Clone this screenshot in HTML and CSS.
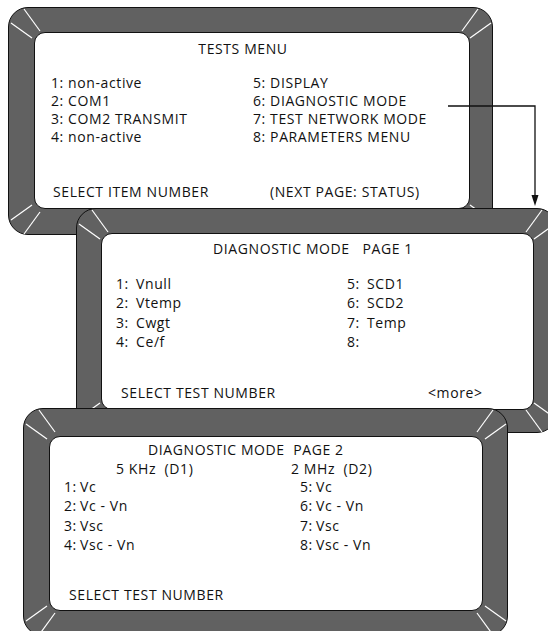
FILE: index.html
```html
<!DOCTYPE html>
<html lang="en">
<head>
    <meta charset="UTF-8">
    <meta name="viewport" content="width=device-width, initial-scale=1.0">
    <title>Tests Menu Screens</title>
    <link rel="stylesheet" href="styles.css">
</head>
<body>
    <div class="canvas">

        <!-- Pantalla 1: menu de tests -->
        <div class="bezel bezel-tests">
            <div class="screen">
                <div class="screen-title title-tests">TESTS MENU</div>
                <div class="menu-grid menu-tests">
                    <ul>
                        <li>1: non-active</li>
                        <li>2: COM1</li>
                        <li>3: COM2 TRANSMIT</li>
                        <li>4: non-active</li>
                    </ul>
                    <ul>
                        <li>5: DISPLAY</li>
                        <li>6: DIAGNOSTIC MODE</li>
                        <li>7: TEST NETWORK MODE</li>
                        <li>8: PARAMETERS MENU</li>
                    </ul>
                </div>
                <div class="screen-footer footer-tests">
                    <span class="footer-left">SELECT ITEM NUMBER</span>
                    <span>(NEXT PAGE: STATUS)</span>
                </div>
            </div>
            <svg class="corner tl" viewBox="0 0 36 36"><line x1="16" y1="2" x2="32" y2="24"/><line x1="3" y1="16" x2="24" y2="31"/></svg>
            <svg class="corner tr" viewBox="0 0 36 36"><line x1="16" y1="2" x2="32" y2="24"/><line x1="3" y1="16" x2="24" y2="31"/></svg>
            <svg class="corner bl" viewBox="0 0 36 36"><line x1="16" y1="2" x2="32" y2="24"/><line x1="3" y1="16" x2="24" y2="31"/></svg>
            <svg class="corner br" viewBox="0 0 36 36"><line x1="16" y1="2" x2="32" y2="24"/><line x1="3" y1="16" x2="24" y2="31"/></svg>
        </div>

        <!-- Flecha desde "6: DIAGNOSTIC MODE" -->
        <svg class="arrow" viewBox="0 0 104 110">
            <path d="M8 6 H95 V97" fill="none" stroke="#111" stroke-width="1.3"/>
            <polygon points="91.5,95 98.5,95 95,106" fill="#111"/>
        </svg>

        <!-- Pantalla 2: diagnostico pagina 1 -->
        <div class="bezel bezel-diag1">
            <div class="screen">
                <div class="screen-title title-diag1">DIAGNOSTIC MODE   PAGE 1</div>
                <div class="menu-grid menu-diag1">
                    <ul>
                        <li><span class="num">1:</span>Vnull</li>
                        <li><span class="num">2:</span>Vtemp</li>
                        <li><span class="num">3:</span>Cwgt</li>
                        <li><span class="num">4:</span>Ce/f</li>
                    </ul>
                    <ul>
                        <li><span class="num">5:</span>SCD1</li>
                        <li><span class="num">6:</span>SCD2</li>
                        <li><span class="num">7:</span>Temp</li>
                        <li><span class="num">8:</span></li>
                    </ul>
                </div>
                <div class="screen-footer footer-diag1">
                    <span class="footer-left">SELECT TEST NUMBER</span>
                    <span>&lt;more&gt;</span>
                </div>
            </div>
            <svg class="corner tl" viewBox="0 0 36 36"><line x1="16" y1="2" x2="32" y2="24"/><line x1="3" y1="16" x2="24" y2="31"/></svg>
            <svg class="corner tr" viewBox="0 0 36 36"><line x1="16" y1="2" x2="32" y2="24"/><line x1="3" y1="16" x2="24" y2="31"/></svg>
            <svg class="corner bl" viewBox="0 0 36 36"><line x1="16" y1="2" x2="32" y2="24"/><line x1="3" y1="16" x2="24" y2="31"/></svg>
            <svg class="corner br" viewBox="0 0 36 36"><line x1="16" y1="2" x2="32" y2="24"/><line x1="3" y1="16" x2="24" y2="31"/></svg>
        </div>

        <!-- Pantalla 3: diagnostico pagina 2 -->
        <div class="bezel bezel-diag2">
            <div class="screen">
                <div class="screen-title title-diag2">DIAGNOSTIC MODE  PAGE 2</div>
                <div class="sub-heads">
                    <div class="sub-head">5 KHz  (D1)</div>
                    <div class="sub-head">2 MHz  (D2)</div>
                </div>
                <div class="menu-grid menu-diag2">
                    <ul>
                        <li><span class="num">1:</span>Vc</li>
                        <li><span class="num">2:</span>Vc - Vn</li>
                        <li><span class="num">3:</span>Vsc</li>
                        <li><span class="num">4:</span>Vsc - Vn</li>
                    </ul>
                    <ul>
                        <li><span class="num">5:</span>Vc</li>
                        <li><span class="num">6:</span>Vc - Vn</li>
                        <li><span class="num">7:</span>Vsc</li>
                        <li><span class="num">8:</span>Vsc - Vn</li>
                    </ul>
                </div>
                <div class="screen-footer footer-diag2">
                    <span class="footer-left">SELECT TEST NUMBER</span>
                </div>
            </div>
            <svg class="corner tl" viewBox="0 0 36 36"><line x1="16" y1="2" x2="32" y2="24"/><line x1="3" y1="16" x2="24" y2="31"/></svg>
            <svg class="corner tr" viewBox="0 0 36 36"><line x1="16" y1="2" x2="32" y2="24"/><line x1="3" y1="16" x2="24" y2="31"/></svg>
            <svg class="corner bl" viewBox="0 0 36 36"><line x1="16" y1="2" x2="32" y2="24"/><line x1="3" y1="16" x2="24" y2="31"/></svg>
            <svg class="corner br" viewBox="0 0 36 36"><line x1="16" y1="2" x2="32" y2="24"/><line x1="3" y1="16" x2="24" y2="31"/></svg>
        </div>

    </div>
</body>
</html>
```

FILE: styles.css
```css
body {
    margin: 0;
    background: #ffffff;
    font-family: "Open Sans", "Noto Sans", sans-serif;
    font-size: 14px;
    letter-spacing: 0.6px;
    color: #111;
}
.canvas {
    position: relative;
    width: 548px;
    height: 631px;
    overflow: hidden;
}

/* marcos de las pantallas */
.bezel {
    position: absolute;
    box-sizing: border-box;
    background: #616161;
    border: 1.5px solid #111;
    border-radius: 20px;
}
.bezel-tests {
    left: 8px;
    top: 7px;
    width: 485px;
    height: 228px;
    padding: 23.5px 22.5px 25.5px 24.5px;
    z-index: 1;
}
.bezel-diag1 {
    left: 76px;
    top: 208px;
    width: 481px;
    height: 225px;
    padding: 23.5px 22.5px 22.5px 23.5px;
    z-index: 3;
}
.bezel-diag2 {
    left: 23px;
    top: 408px;
    width: 485px;
    height: 228px;
    padding: 26.5px 24.5px 24.5px 24.5px;
    z-index: 4;
}
.screen {
    box-sizing: border-box;
    height: 100%;
    background: #fff;
    border: 1.5px solid #111;
    border-radius: 11px;
}

/* lineas blancas en las esquinas */
.corner {
    position: absolute;
    width: 36px;
    height: 36px;
    stroke: #fff;
    stroke-width: 1.2;
}
.corner.tl { top: -1.5px; left: -1.5px; }
.corner.tr { top: -1.5px; right: -1.5px; transform: scaleX(-1); }
.corner.bl { bottom: -1.5px; left: -1.5px; transform: scaleY(-1); }
.corner.br { bottom: -1.5px; right: -1.5px; transform: scale(-1, -1); }

.arrow {
    position: absolute;
    left: 440px;
    top: 100px;
    width: 104px;
    height: 110px;
    z-index: 2;
}

/* textos */
.screen-title {
    white-space: pre;
}
.menu-grid {
    display: grid;
}
.menu-grid ul {
    list-style: none;
    margin: 0;
    padding: 0;
}
.num {
    display: inline-block;
}
.screen-footer {
    display: flex;
}
.footer-left {
    flex: none;
}

/* pantalla 1 */
.bezel-tests .screen {
    line-height: 17.8px;
}
.title-tests {
    padding: 7px 17px 0 0;
    text-align: center;
}
.menu-tests {
    grid-template-columns: 202px 1fr;
    margin-top: 17px;
    padding-left: 16.5px;
}
.footer-tests {
    margin-top: 38px;
    padding-left: 18.5px;
}
.footer-tests .footer-left {
    width: 217px;
}

/* pantalla 2 */
.bezel-diag1 .screen {
    line-height: 19.3px;
}
.title-diag1 {
    padding: 5.5px 8px 0 0;
    text-align: center;
}
.menu-diag1 {
    grid-template-columns: 231px 1fr;
    margin-top: 15.7px;
    padding-left: 14.5px;
}
.menu-diag1 .num {
    width: 20px;
}
.footer-diag1 {
    margin-top: 31.8px;
    padding-left: 19.5px;
}
.footer-diag1 .footer-left {
    width: 307px;
}

/* pantalla 3 */
.bezel-diag2 .screen {
    line-height: 19.5px;
}
.title-diag2 {
    padding: 3.5px 0 0 98.5px;
}
.sub-heads {
    display: grid;
    grid-template-columns: 175px 1fr;
    line-height: 17px;
    padding-left: 66.5px;
}
.sub-head {
    white-space: pre;
}
.menu-diag2 {
    grid-template-columns: 236px 1fr;
    padding-left: 14.5px;
}
.menu-diag2 .num {
    width: 16px;
}
.footer-diag2 {
    margin-top: 30px;
    padding-left: 19.5px;
}
```
